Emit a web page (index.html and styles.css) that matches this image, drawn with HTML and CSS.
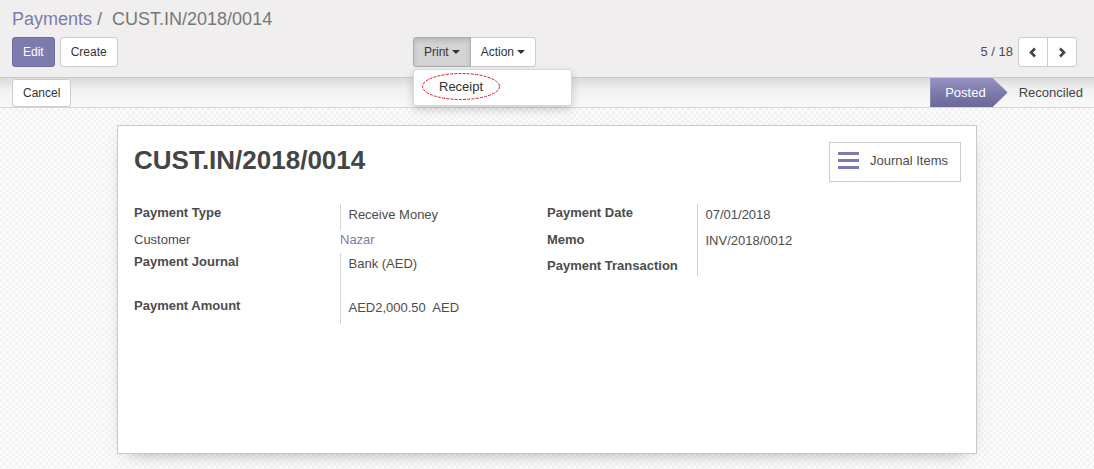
FILE: index.html
```html
<!DOCTYPE html>
<html>
<head>
<meta charset="utf-8">
<link rel="stylesheet" href="styles.css">
</head>
<body>
<div class="app">
  <div class="cp">
    <ol class="crumbs">
      <li class="crumb-link">Payments</li>
      <li class="crumb-active"><span class="crumb-sep">/&nbsp;</span>CUST.IN/2018/0014</li>
    </ol>
    <div class="cp-row">
      <div class="cp-buttons">
        <button class="btn btn-primary">Edit</button>
        <button class="btn">Create</button>
      </div>
      <div class="cp-sidebar">
        <div class="dropdown">
          <button class="btn btn-active grp-left">Print<span class="caret"></span></button>
          <div class="menu">
            <div class="menu-item">Receipt</div>
            <svg class="mark" width="80" height="29" viewBox="0 0 80 29"><ellipse cx="40" cy="14.5" rx="38.5" ry="13" fill="none" stroke="#e01b24" stroke-width="1" stroke-dasharray="3 1.2"/></svg>
          </div>
        </div>
        <button class="btn grp-right">Action<span class="caret"></span></button>
      </div>
      <div class="pager">
        <span class="pager-value">5 / 18</span>
        <div class="pager-btns">
          <button class="btn pager-btn grp-left"><svg width="8" height="11" viewBox="0 0 8 11"><polyline points="6,1.5 2,5.5 6,9.5" fill="none" stroke="#444" stroke-width="2.6"/></svg></button>
          <button class="btn pager-btn grp-right"><svg width="8" height="11" viewBox="0 0 8 11"><polyline points="2,1.5 6,5.5 2,9.5" fill="none" stroke="#444" stroke-width="2.6"/></svg></button>
        </div>
      </div>
    </div>
  </div>

  <div class="statusbar">
    <button class="btn btn-cancel">Cancel</button>
    <div class="states">
      <span class="state state-current">Posted</span>
      <span class="state">Reconciled</span>
    </div>
  </div>

  <div class="content">
    <div class="sheet">
      <div class="sheet-top">
        <h1 class="title">CUST.IN/2018/0014</h1>
        <button class="journal-btn">
          <svg width="21" height="17" viewBox="0 0 21 17"><rect x="0" y="0" width="21" height="3" fill="#7c7bad"/><rect x="0" y="7" width="21" height="3" fill="#7c7bad"/><rect x="0" y="14" width="21" height="3" fill="#7c7bad"/></svg>
          <span>Journal Items</span>
        </button>
      </div>
      <div class="groups">
        <table class="group group-left">
          <colgroup><col class="lcol-left"><col></colgroup>
          <tr class="r26"><td class="lbl">Payment Type</td><td class="val">Receive Money</td></tr>
          <tr class="r23"><td class="lbl lbl-plain pad1">Customer</td><td class="val-link pad1">Nazar</td></tr>
          <tr class="r44"><td class="lbl">Payment Journal</td><td class="val">Bank (AED)</td></tr>
          <tr class="r27"><td class="lbl">Payment Amount</td><td class="val">AED2,000.50&nbsp; AED</td></tr>
        </table>
        <table class="group group-right">
          <colgroup><col class="lcol-right"><col></colgroup>
          <tr class="r27"><td class="lbl">Payment Date</td><td class="val">07/01/2018</td></tr>
          <tr class="r26"><td class="lbl">Memo</td><td class="val pad1">INV/2018/0012</td></tr>
          <tr class="r19"><td class="lbl">Payment Transaction</td><td class="val"></td></tr>
        </table>
      </div>
    </div>
  </div>
</div>
</body>
</html>
```

FILE: styles.css
```css
* { box-sizing: border-box; }

html, body {
  margin: 0;
  padding: 0;
  height: 100%;
}

body {
  font-family: "Liberation Sans", Arial, sans-serif;
  font-size: 13px;
  line-height: 18px;
  color: #4c4c4c;
  overflow: hidden;
}

.app {
  display: flex;
  flex-direction: column;
  height: 100vh;
}

/* control panel */
.cp {
  background: #f0eeee;
  padding: 6px 17px 10px 12px;
  border-bottom: 1px solid #c9c9c9;
}

.crumbs {
  list-style: none;
  margin: 0;
  padding: 0;
  display: flex;
  font-size: 18px;
  line-height: 26px;
}

.crumb-link { color: #7c7bad; }

.crumb-active { color: #777; }

.crumb-sep { padding: 0 5px; }

.cp-row {
  display: flex;
  align-items: center;
  margin-top: 5px;
  height: 30px;
}

.cp-buttons {
  flex: none;
  width: 401px;
  display: flex;
  gap: 5px;
}

.btn {
  font-family: "Liberation Sans", Arial, sans-serif;
  font-size: 12px;
  line-height: 18px;
  height: 30px;
  padding: 5px 10px;
  border: 1px solid #ccc;
  border-radius: 3px;
  background: #fff;
  color: #333;
  display: inline-flex;
  align-items: center;
  margin: 0;
}

.btn-primary {
  background: #7c7bad;
  border-color: #6e6d9f;
  color: #fff;
}

.cp-sidebar {
  display: flex;
}

.dropdown {
  position: relative;
  display: flex;
}

.btn-active {
  background: #d4d4d4;
  border-color: #adadad;
  box-shadow: inset 0 3px 5px rgba(0, 0, 0, 0.125);
}

.grp-left {
  border-top-right-radius: 0;
  border-bottom-right-radius: 0;
}

.grp-right {
  border-top-left-radius: 0;
  border-bottom-left-radius: 0;
  margin-left: -1px;
}

.caret {
  display: inline-block;
  width: 0;
  height: 0;
  margin-left: 3px;
  border-top: 4px solid #333;
  border-left: 4px solid transparent;
  border-right: 4px solid transparent;
}

.menu {
  position: absolute;
  top: 32px;
  left: 0;
  width: 159px;
  background: #fff;
  border: 1px solid rgba(0, 0, 0, 0.15);
  border-radius: 3px;
  box-shadow: 0 4px 10px rgba(0, 0, 0, 0.175);
  padding: 5px 0;
  z-index: 10;
}

.menu-item {
  padding: 3px 25px;
  line-height: 18.5px;
  color: #333;
  font-size: 13px;
}

.mark {
  position: absolute;
  left: 7px;
  top: 2px;
  pointer-events: none;
}

.pager {
  margin-left: auto;
  display: flex;
  align-items: center;
  gap: 5px;
}

.pager-value {
  font-size: 13px;
  color: #4c4c4c;
}

.pager-btns { display: flex; }

.pager-btn {
  width: 30px;
  justify-content: center;
  padding: 0;
}

/* statusbar */
.statusbar {
  height: 30px;
  display: flex;
  align-items: center;
  padding-left: 12px;
  background: linear-gradient(to bottom, #dcdcdc 0%, #f2f2f2 45%, #f9f9f9 100%);
  border-bottom: 1px solid #d6d6d6;
}

.btn-cancel {
  height: 28px;
  padding: 4px 10px;
  background: #fff;
}

.states {
  margin-left: auto;
  display: flex;
  align-self: stretch;
}

.state {
  display: flex;
  align-items: center;
  padding: 0 11px;
  font-size: 13px;
  color: #444;
}

.state-current {
  padding: 0 22px 0 15px;
  color: #fff;
  background: linear-gradient(to bottom, #9694c4 0%, #7c7bad 50%, #6a6899 100%);
  clip-path: polygon(0 0, calc(100% - 15px) 0, 100% 50%, calc(100% - 15px) 100%, 0 100%);
}

/* content */
.content {
  flex: 1;
  padding-top: 17px;
  background: repeating-conic-gradient(#f3f3f3 0 25%, #fcfcfc 0 50%) 0 0 / 6px 6px;
}

.sheet {
  width: 860px;
  height: 329px;
  margin: 0 auto;
  background: #fff;
  border: 1px solid #c8c8d3;
  box-shadow: 0 6px 18px -12px rgba(0, 0, 0, 0.6);
  padding: 16px 15px 16px 16px;
}

.sheet-top {
  display: flex;
  justify-content: space-between;
  align-items: flex-start;
}

.title {
  margin: 4px 0 0 0;
  font-size: 26px;
  line-height: 28px;
  font-weight: bold;
  color: #454545;
}

.journal-btn {
  height: 40px;
  display: flex;
  align-items: center;
  gap: 11px;
  padding: 0 12px 3px 8px;
  border: 1px solid #ccc;
  background: #fff;
  font-family: "Liberation Sans", Arial, sans-serif;
  font-size: 13px;
  color: #4c4c4c;
  margin: 0;
}

.groups {
  display: grid;
  grid-template-columns: 413px 413px;
  align-items: start;
  margin-top: 22px;
}

.group {
  border-collapse: collapse;
  table-layout: fixed;
  width: 100%;
}

.lcol-left { width: 206px; }
.lcol-right { width: 150px; }

.group td {
  padding: 0;
  vertical-align: top;
}

.r19 { height: 19px; }
.r23 { height: 23px; }
.r26 { height: 26px; }
.r27 { height: 27px; }
.r44 { height: 44px; }

.group .lbl {
  font-weight: bold;
  color: #4c4c4c;
}

.group .lbl-plain { font-weight: normal; }

.group .val {
  padding: 2px 0 0 8px;
  border-left: 1px solid #d4d4d4;
  color: #4c4c4c;
}

.group .val-link {
  color: #7c7bad;
}

.group .pad1 { padding-top: 1px; }
```
